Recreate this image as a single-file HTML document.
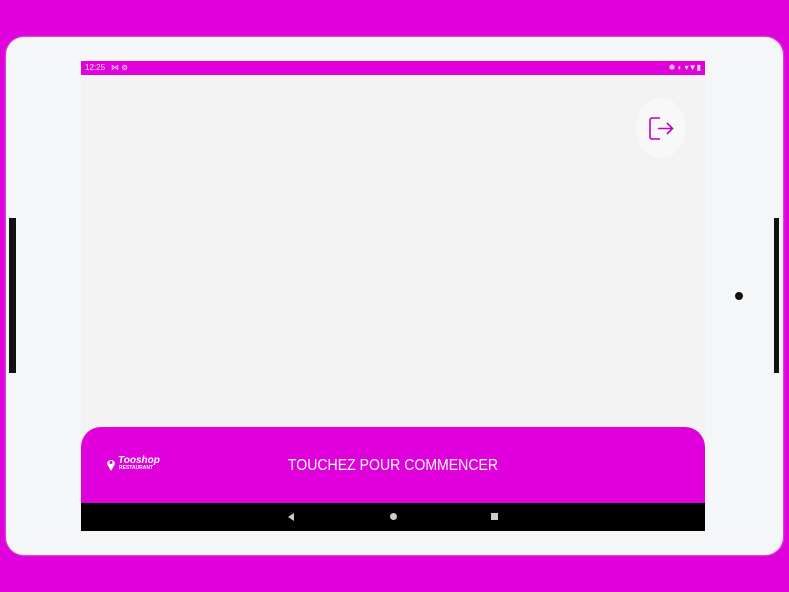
<!DOCTYPE html>
<html><head><style>
body{margin:0;width:789px;height:592px;background:#e000dc;position:relative;overflow:hidden;font-family:"Liberation Sans",sans-serif}
.frame{position:absolute;left:6px;top:37px;width:777px;height:518px;background:#f5f6f7;border-radius:18px;box-shadow:0 0 2px #ccc}
.strip{position:absolute;background:#111;}
.screen{position:absolute;left:81px;top:61px;width:624px;height:470px;background:#f3f3f4;overflow:hidden}
.status{position:absolute;left:0;top:0;width:624px;height:14px;background:#e000dc;color:#fbe0fb;font-size:8px;line-height:14px}
.panel{position:absolute;left:0;top:366px;width:624px;height:76px;background:#e000dc;border-radius:20px 20px 0 0}
.nav{position:absolute;left:0;top:442px;width:624px;height:28px;background:#000}
</style></head><body>
<div class="frame"></div>
<div class="strip" style="left:9px;top:218px;width:7px;height:155px"></div>
<div class="strip" style="left:774px;top:218px;width:5px;height:155px"></div>
<div style="position:absolute;left:735px;top:292px;width:8px;height:8px;border-radius:50%;background:#111"></div>
<div class="screen">
 <div class="status"><span style="margin-left:4px">12:25</span><span style="margin-left:6px">⋈ ⊚</span><span style="position:absolute;right:4px">✱ ◐ ▾▼▮</span></div>
 <div style="position:absolute;left:555px;top:37px;width:50px;height:60px;border-radius:50%;background:#f8f8f9"></div>
 <svg style="position:absolute;left:566px;top:55px" width="30" height="26" viewBox="0 0 30 26"><path d="M13 2H5a2 2 0 0 0-2 2v17a2 2 0 0 0 2 2h8" fill="none" stroke="#c000c0" stroke-width="1.6" stroke-linejoin="round"/><path d="M11 12.5h14M20 7l5.5 5.5L20 18" fill="none" stroke="#c000c0" stroke-width="1.6"/></svg>
 <div class="panel">
  <svg style="position:absolute;left:25px;top:30px" width="10" height="14" viewBox="0 0 10 14"><path d="M5 14L1 7a4 4 0 1 1 8 0z" fill="#fff"/><circle cx="5" cy="5.5" r="1.5" fill="#e000dc"/></svg>
  <div style="position:absolute;left:37px;top:29px;color:#fff;font-size:10px;font-weight:bold;font-style:italic;line-height:10px">Tooshop</div>
  <div style="position:absolute;left:38px;top:39px;color:#fff;font-size:5px;font-weight:bold;line-height:5px">RESTAURANT</div>
  <div style="position:absolute;left:0;width:624px;top:30px;text-align:center;color:#fff;font-size:16px;line-height:18px;transform:scaleX(0.88)">TOUCHEZ POUR COMMENCER</div>
 </div>
 <div class="nav">
  <div style="position:absolute;left:207px;top:10px;width:0;height:0;border-top:4px solid transparent;border-bottom:4px solid transparent;border-right:6px solid #ccc"></div>
  <div style="position:absolute;left:309px;top:10px;width:7px;height:7px;border-radius:50%;background:#ccc"></div>
  <div style="position:absolute;left:410px;top:10px;width:7px;height:7px;background:#ccc"></div>
 </div>
</div>
</body></html>
